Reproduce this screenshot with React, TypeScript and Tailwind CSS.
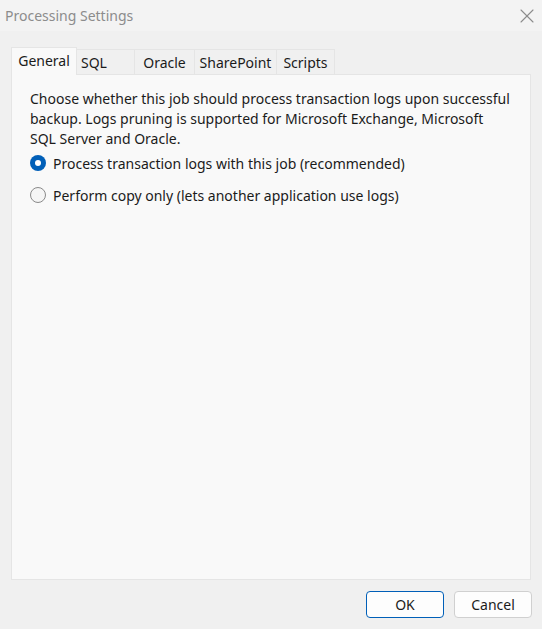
import { X } from 'lucide-react';

const tabs = ['General', 'SQL', 'Oracle', 'SharePoint', 'Scripts'];
const tabWidths = ['w-[66px]', 'w-[58px]', 'w-[60px]', 'w-[82px]', 'w-[58px]'];

function Radio({ checked, label }: { checked: boolean; label: string }) {
  return (
    <label className="flex items-center h-[20px] gap-[7px]">
      {checked ? (
        <span className="w-[16px] h-[16px] rounded-full bg-[#005fb8] flex items-center justify-center">
          <span className="w-[6px] h-[6px] rounded-full bg-white" />
        </span>
      ) : (
        <span className="w-[16px] h-[16px] rounded-full border border-[#8a8a8a] bg-[#f5f5f5]" />
      )}
      <span>{label}</span>
    </label>
  );
}

export default function App() {
  return (
    <div
      className="w-[542px] h-[629px] bg-[#f0f0f0] flex flex-col text-[14px] text-[#1b1b1b]"
      style={{ fontFamily: '"Noto Sans", "Open Sans", sans-serif' }}
    >
      {/* Title bar */}
      <div className="h-[31px] bg-[#f3f3f3] flex items-center justify-between pl-[5px] pr-[3px]">
        <span className="text-[14px] text-[#8c8c8c]">Processing Settings</span>
        <X className="w-[24px] h-[24px] text-[#8c8c8c]" strokeWidth={1.1} />
      </div>

      {/* Tabs */}
      <div className="mt-[16px] ml-[11px] flex items-end h-[27px] relative z-10">
        {tabs.map((t, i) =>
          i === 0 ? (
            <div
              key={t}
              className={`${tabWidths[i]} h-[28px] -mb-px bg-[#f9f9f9] border border-b-0 border-[#e5e5e5] flex items-center justify-center pb-[3px]`}
            >
              {t}
            </div>
          ) : (
            <div
              key={t}
              className={`${tabWidths[i]} h-[25px] border border-b-0 border-l-0 border-[#e5e5e5] bg-[#f0f0f0] flex items-center ${i === 1 ? 'pl-[4px]' : 'justify-center'}`}
            >
              {t}
            </div>
          )
        )}
      </div>

      {/* Panel */}
      <div className="ml-[11px] w-[520px] h-[506px] bg-[#f9f9f9] border border-[#e5e5e5] pt-[14px] pl-[18px]">
        <p className="leading-[20px] w-[481px]">
          Choose whether this job should process transaction logs upon successful backup. Logs pruning is
          supported for Microsoft Exchange, Microsoft SQL Server and Oracle.
        </p>
        <div className="mt-[4px] flex flex-col gap-[12px]">
          <Radio checked label="Process transaction logs with this job (recommended)" />
          <Radio checked={false} label="Perform copy only (lets another application use logs)" />
        </div>
      </div>

      {/* Buttons */}
      <div className="mt-[11px] flex justify-end gap-[10px] pr-[10px]">
        <button className="w-[78px] h-[27px] rounded-[4px] bg-[#fdfdfd] border border-[#005fb8] text-[14px]">
          OK
        </button>
        <button className="w-[78px] h-[27px] rounded-[4px] bg-[#fdfdfd] border border-[#d0d0d0] text-[14px]">
          Cancel
        </button>
      </div>
    </div>
  );
}
